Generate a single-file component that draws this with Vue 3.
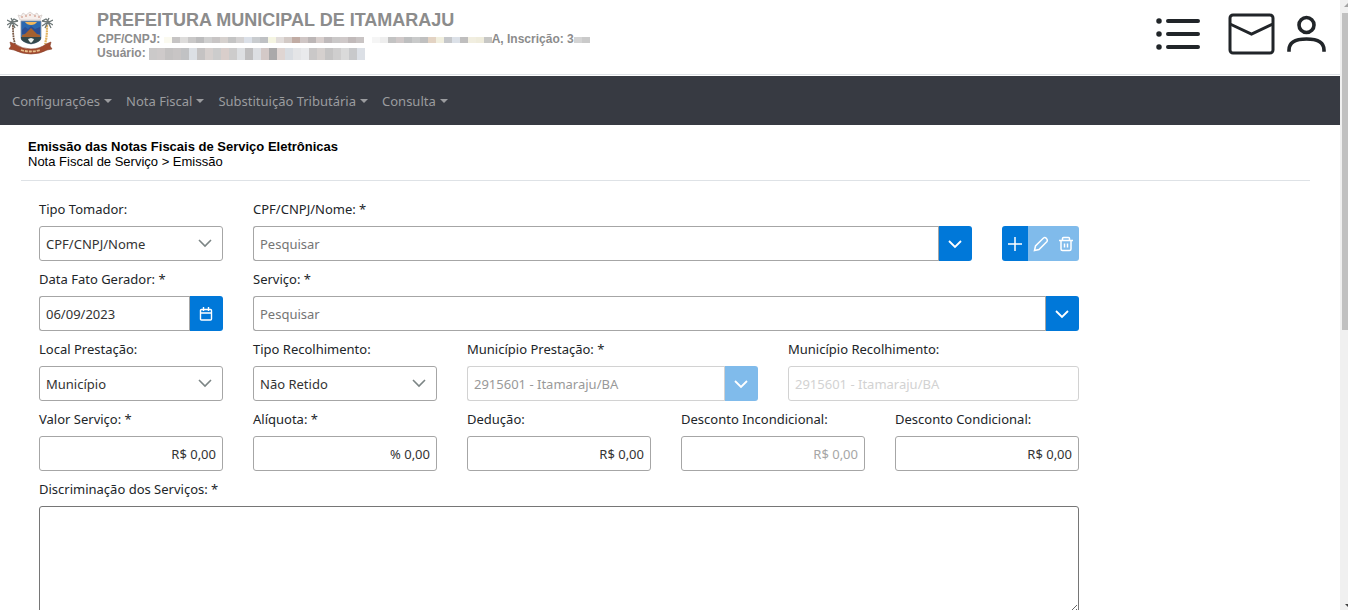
<template>
  <div class="layout">
    <div class="page">
      <header class="header">
        <!-- brasão do município -->
        <svg class="crest" viewBox="0 0 46 46" role="img" aria-label="Brasão">
          <path d="M13 10l-2-5 3 1 2-3 3 2 4-3 4 3 3-2 2 3 3-1-2 5z" fill="#f6efec" stroke="#d6cdca" stroke-width="0.8" />
          <path d="M14 7h2M18 6h2M22 5h2M27 6h2M31 7h2" stroke="#c98b78" stroke-width="1.2" />
          <path d="M6 15c0 7 0 12 2 19" stroke="#7a5b48" stroke-width="1.8" fill="none" stroke-dasharray="2 0.6" />
          <path d="M0 10l4 2 3-3 4 2M0 15l5-3 6 4M2 18l3-6 3 6M4 8l2 4 5-1" fill="none" stroke="#6d7777" stroke-width="1.3" />
          <path d="M40 15c0 7 0 12-2 19" stroke="#e2b35f" stroke-width="2.2" fill="none" stroke-dasharray="2 0.6" />
          <path d="M46 10l-4 2-3-3-4 2M46 15l-5-3-6 4M44 18l-3-6-3 6M42 8l-2 4-5-1" fill="none" stroke="#6d7777" stroke-width="1.3" />
          <path d="M14 11h20v17q0 4-10 6-10-2-10-6z" fill="#2a68b0" stroke="#8994a3" stroke-width="0.8" />
          <path d="M18 12h12q-2 3-6 3t-6-3z" fill="#f3b85c" />
          <path d="M15 20l3-3 3 2 3-3 4 3 5-2v7H15z" fill="#2c4f93" />
          <path d="M15 25q3 0 5-3l4-4 4 4q2 3 5 3v2H15z" fill="#a5612f" />
          <path d="M14 27h20v1q0 4-10 6-10-2-10-6z" fill="#34484b" />
          <path d="M21 29l3-1 3 1-1 2-2 2-2-2z" fill="#edf2ef" />
          <path d="M3 32l5 2q7 5 16 5t15-5l5-2-1 4 2 3-5 1q-7 4-16 4T7 40l-5-1 2-3z" fill="#a34a2e" stroke="#85402a" stroke-width="0.6" />
          <path d="M14 40q9 3 19 0" fill="none" stroke="#e8c08c" stroke-width="1.8" stroke-dasharray="3 1" />
        </svg>

        <div class="identity">
          <h1>PREFEITURA MUNICIPAL DE ITAMARAJU</h1>
          <p>
            CPF/CNPJ:
            <span class="mask mask-document" aria-hidden="true">
              <i v-for="(color, index) in documentMask" :key="index" :style="{ background: color }"></i>
            </span>A, Inscrição: 3<span class="mask" aria-hidden="true">
              <i v-for="(color, index) in registryMask" :key="index" :style="{ background: color }"></i>
            </span>
          </p>
          <p>
            Usuário:
            <span class="mask mask-user" aria-hidden="true">
              <i v-for="(color, index) in userMask" :key="index" :style="{ background: color }"></i>
            </span>
          </p>
        </div>

        <div class="header-actions">
          <button type="button" class="list-button" aria-label="Menu">
            <svg width="48" height="40" viewBox="0 0 48 40" fill="none" stroke="#212529" stroke-width="4" stroke-linecap="round">
              <path d="M14 7h30M14 20h30M14 33h30" />
              <path d="M5 7h0M5 20h0M5 33h0" stroke-width="5.5" />
            </svg>
          </button>
          <button type="button" aria-label="Mensagens">
            <svg width="48" height="42" viewBox="0 0 48 42" fill="none" stroke="#212529" stroke-width="3">
              <rect x="2" y="2" width="43" height="38" rx="3" />
              <path d="M2 11l21.5 10L45 11" />
            </svg>
          </button>
          <button type="button" class="user-button" aria-label="Usuário">
            <svg width="40" height="40" viewBox="0 0 40 40" fill="none" stroke="#212529" stroke-width="3.6">
              <circle cx="19.5" cy="11" r="7.5" />
              <path d="M2 36c0-8 6-11 17.5-11S37 28 37 36" stroke-linecap="square" />
            </svg>
          </button>
        </div>
      </header>

      <nav class="navbar">
        <a v-for="item in menu" :key="item" href="#" @click.prevent>{{ item }}</a>
      </nav>

      <main class="content">
        <div class="heading">
          <h2>Emissão das Notas Fiscais de Serviço Eletrônicas</h2>
          <p>Nota Fiscal de Serviço &gt; Emissão</p>
        </div>

        <form class="form" @submit.prevent>
          <div class="row">
            <div class="field span-2">
              <label for="tipo-tomador">Tipo Tomador:</label>
              <div class="select">
                <select id="tipo-tomador" v-model="form.tipoTomador">
                  <option>CPF/CNPJ/Nome</option>
                </select>
                <svg viewBox="0 0 14 14"><path d="M1 4l6 6 6-6" /></svg>
              </div>
            </div>
            <div class="field span-7">
              <label for="tomador">CPF/CNPJ/Nome: *</label>
              <div class="group">
                <input id="tomador" v-model="form.tomador" type="text" placeholder="Pesquisar">
                <button type="button" aria-label="Abrir lista de tomadores">
                  <svg viewBox="0 0 14 14"><path d="M1 4l6 6 6-6" /></svg>
                </button>
              </div>
            </div>
            <div class="tools">
              <button type="button" aria-label="Adicionar">
                <svg viewBox="0 0 16 16"><path d="M8 1v14M1 8h14" /></svg>
              </button>
              <button type="button" aria-label="Editar" disabled>
                <svg viewBox="0 0 16 16"><path d="M1.5 14.5l1-4.500 8-8q1.500-1 3 .5t.5 3l-8 8z" /></svg>
              </button>
              <button type="button" aria-label="Excluir" disabled>
                <svg viewBox="0 0 16 16"><path d="M1 4.5h14M4.500 4V2.500q0-1 1-1h5q1 0 1 1V4M3 4.500v8.500q0 1.500 1.500 1.500h7q1.500 0 1.500-1.500V4.500M6.500 7.500v4M9.500 7.500v4" /></svg>
              </button>
            </div>
          </div>

          <div class="row">
            <div class="field span-2">
              <label for="data">Data Fato Gerador: *</label>
              <div class="group">
                <input id="data" v-model="form.data" type="text">
                <button type="button" aria-label="Abrir calendário">
                  <svg viewBox="0 0 14 14"><path d="M2.5 2.5h9q1 0 1 1v8.500q0 1-1 1h-9q-1 0-1-1V3.500q0-1 1-1zM1.500 6h11M4.500 0v4M9.500 0v4" stroke-width="1.4" /></svg>
                </button>
              </div>
            </div>
            <div class="field span-8">
              <label for="servico">Serviço: *</label>
              <div class="group">
                <input id="servico" v-model="form.servico" type="text" placeholder="Pesquisar">
                <button type="button" aria-label="Abrir lista de serviços">
                  <svg viewBox="0 0 14 14"><path d="M1 4l6 6 6-6" /></svg>
                </button>
              </div>
            </div>
          </div>

          <div class="row">
            <div class="field span-2">
              <label for="local">Local Prestação:</label>
              <div class="select">
                <select id="local" v-model="form.local">
                  <option>Município</option>
                </select>
                <svg viewBox="0 0 14 14"><path d="M1 4l6 6 6-6" /></svg>
              </div>
            </div>
            <div class="field span-2">
              <label for="recolhimento">Tipo Recolhimento:</label>
              <div class="select">
                <select id="recolhimento" v-model="form.recolhimento">
                  <option>Não Retido</option>
                </select>
                <svg viewBox="0 0 14 14"><path d="M1 4l6 6 6-6" /></svg>
              </div>
            </div>
            <div class="field span-3">
              <label for="municipio-prestacao">Município Prestação: *</label>
              <div class="group">
                <input id="municipio-prestacao" class="muted" type="text" :value="form.municipio" disabled>
                <button type="button" aria-label="Abrir lista de municípios" disabled>
                  <svg viewBox="0 0 14 14"><path d="M1 4l6 6 6-6" /></svg>
                </button>
              </div>
            </div>
            <div class="field span-3">
              <label for="municipio-recolhimento">Município Recolhimento:</label>
              <input id="municipio-recolhimento" class="faded" type="text" :value="form.municipio" disabled>
            </div>
          </div>

          <div class="row">
            <div v-for="item in amounts" :key="item.id" class="field span-2">
              <label :for="item.id">{{ item.label }}</label>
              <input :id="item.id" v-model="item.value" class="amount" type="text" :disabled="item.disabled">
            </div>
          </div>

          <div class="row">
            <div class="field span-10">
              <label for="discriminacao">Discriminação dos Serviços: *</label>
              <textarea id="discriminacao" v-model="form.discriminacao"></textarea>
            </div>
          </div>
        </form>
      </main>
    </div>

    <div class="scrollbar" aria-hidden="true">
      <svg class="arrow" width="8" height="13" viewBox="0 0 8 13"><path d="M4 7l4-4v4z" fill="#a3a3a3" /></svg>
      <div class="thumb"></div>
      <svg class="arrow down" width="8" height="8" viewBox="0 0 8 8"><path d="M5 2h3v3z" fill="#404040" /></svg>
    </div>
  </div>
</template>

<script setup>
import { reactive } from 'vue'

const menu = ['Configurações', 'Nota Fiscal', 'Substituição Tributária', 'Consulta']

const form = reactive({
  tipoTomador: 'CPF/CNPJ/Nome',
  tomador: '',
  data: '06/09/2023',
  servico: '',
  local: 'Município',
  recolhimento: 'Não Retido',
  municipio: '2915601 - Itamaraju/BA',
  discriminacao: ''
})

const amounts = reactive([
  { id: 'valor', label: 'Valor Serviço: *', value: 'R$ 0,00' },
  { id: 'aliquota', label: 'Alíquota: *', value: '% 0,00' },
  { id: 'deducao', label: 'Dedução:', value: 'R$ 0,00' },
  { id: 'incondicional', label: 'Desconto Incondicional:', value: 'R$ 0,00', disabled: true },
  { id: 'condicional', label: 'Desconto Condicional:', value: 'R$ 0,00' }
])

// blocos que ocultam os dados pessoais
const documentMask = [
  '#fbfaf0', '#c6c4c4', '#dddcdb', '#c9c8c8', '#bcbcbd', '#cfcfcf', '#c8c5c5', '#d6d1ce', '#c4c4c4',
  '#d4d2d2', '#dbe0e8', '#c9cccf', '#bfc1c4', '#f5f5e2', '#e2dddb', '#d3cac6', '#c1aca4', '#cfc6c5',
  '#bcb6b6', '#d8cfcd', '#bfbabb', '#cac8c8', '#cfc9c9', '#c1baba', '#c9c4c4', '#ffffff', '#f5f5f5',
  '#eeeeee', '#c3c3c3', '#d0c9c9', '#bebfc0', '#c9caca', '#c0c0c0', '#e3d3c3', '#f1efdf', '#c5c7ca',
  '#dce1e8', '#bfbebe', '#f1eee0', '#efecdc', '#c7c7c5'
]
const registryMask = ['#d4d4d4', '#cacaca']
const userMask = [
  '#cbc9c9', '#cecaca', '#c4c2c2', '#c8c5c5', '#c1c2c4', '#dce0e5', '#c5c3c3', '#d6d0ce', '#cccccc',
  '#d9cecb', '#cdcccc', '#dddfe2', '#bfbebf', '#dcdee2', '#d3c9c7', '#aaa9aa', '#dfd5d2', '#d9dde2',
  '#e4e5e7', '#e9eaec', '#cac8c8', '#d5d0ce', '#c5c4c4', '#cfcece', '#dadada', '#c8c9cb', '#dce0e6'
]
</script>

<style>
body {
  margin: 0;
  background: #fff;
  overflow: hidden;
}
</style>

<style scoped>
* {
  box-sizing: border-box;
}

.layout {
  display: flex;
  height: 100vh;
  overflow: hidden;
  font-family: "Segoe UI", "Noto Sans", sans-serif;
  font-size: 13px;
  color: #212529;
}

.page {
  flex: 1;
  min-width: 0;
}

button {
  display: flex;
  align-items: center;
  justify-content: center;
  padding: 0;
  border: 0;
  background: none;
  cursor: pointer;
}

.header {
  display: flex;
  align-items: flex-start;
  height: 75px;
  margin-bottom: 1px;
  padding: 10px 13px 0 7px;
  border-bottom: 1px solid #dee2e6;
}

.crest {
  width: 46px;
  height: 46px;
}

.identity {
  margin-left: 44px;
  font-family: "Liberation Sans", Arial, sans-serif;
  font-size: 12px;
  font-weight: bold;
  line-height: 14px;
  color: #8c8c8c;
}

.identity h1 {
  margin: 0 0 2px;
  font-size: 18px;
  line-height: 20px;
}

.identity p {
  margin: 0;
  white-space: nowrap;
}

.mask {
  display: inline-flex;
  height: 6px;
  overflow: hidden;
}

.mask i {
  width: 8px;
}

.mask-user {
  height: 12px;
  vertical-align: bottom;
}

.header-actions {
  display: flex;
  align-items: center;
  margin-left: auto;
  padding-top: 3px;
}

.list-button {
  margin-right: 26px;
}

.user-button {
  margin-left: 11px;
}

.navbar {
  display: flex;
  align-items: center;
  gap: 14px;
  height: 49px;
  padding: 0 12px;
  background: #373a42;
}

.navbar a {
  display: flex;
  align-items: center;
  gap: 4px;
  color: #9b9c9f;
  text-decoration: none;
}

.navbar a::after {
  content: "";
  border: 4px solid transparent;
  border-top-color: currentColor;
  border-bottom: 0;
}

.content {
  margin: 0 30px 0 21px;
}

.heading {
  padding: 14px 7px 11px;
  border-bottom: 1px solid #dee2e6;
  font-family: "Liberation Sans", Arial, sans-serif;
  font-size: 13px;
  line-height: 15px;
  color: #000;
}

.heading h2,
.heading p {
  margin: 0;
  font-size: 13px;
}

.form {
  padding: 10px 17px 0 18px;
}

.row {
  display: grid;
  grid-template-columns: repeat(12, minmax(0, 1fr));
  column-gap: 30px;
  align-items: end;
}

.span-2 { grid-column: span 2; }
.span-3 { grid-column: span 3; }
.span-7 { grid-column: span 7; }
.span-8 { grid-column: span 8; }
.span-10 { grid-column: span 10; }

.field label {
  display: block;
  padding-top: 2px;
  line-height: 33px;
  white-space: nowrap;
}

.field input,
.field select,
.field textarea {
  display: block;
  width: 100%;
  height: 35px;
  margin: 0;
  padding: 0 6px;
  border: 1px solid #a6a6a6;
  border-radius: 3px;
  background: #fff;
  font: inherit;
  color: #333;
}

.field select {
  appearance: none;
}

.field input::placeholder {
  color: #757575;
}

.field textarea {
  height: 108px;
  border-color: #767676;
}

.field .amount {
  text-align: right;
}

.field .amount:disabled {
  color: #a6a6a6;
}

.field .muted {
  border-color: #d2d2d2;
  color: #999;
}

.field .faded {
  border-color: #d2d2d2;
  color: #d2d2d2;
}

.select {
  position: relative;
}

.select svg {
  position: absolute;
  top: 10px;
  right: 11px;
  width: 14px;
  height: 14px;
  fill: none;
  stroke: #7c8585;
  stroke-width: 1.6;
  pointer-events: none;
}

.group {
  display: flex;
}

.field .group input {
  flex: 1;
  min-width: 0;
  border-right: 0;
  border-radius: 3px 0 0 3px;
}

.group button {
  width: 34px;
  height: 35px;
  padding-right: 1px;
  border-left: 1px solid #a6a6a6;
  border-radius: 0 3px 3px 0;
  background: #0078d9;
}

.group button:disabled {
  border-left-color: #d2d2d2;
  background: #80bbeb;
}

.group svg,
.tools svg {
  width: 14px;
  height: 14px;
  fill: none;
  stroke: #fff;
  stroke-width: 1.8;
}

.tools {
  display: flex;
  overflow: hidden;
  border-radius: 3px;
}

.tools button {
  flex: 1;
  height: 35px;
  background: #0078d9;
}

.tools button:disabled {
  background: #80bbeb;
}

.tools svg {
  width: 16px;
  height: 16px;
  stroke-width: 1.5;
}

.scrollbar {
  display: flex;
  flex-direction: column;
  width: 8px;
  background: #f0f0f0;
}

.arrow {
  flex: none;
}

.down {
  margin-top: auto;
}

.thumb {
  height: 52%;
  margin-left: 2px;
  background: #c1c1c1;
}
</style>
